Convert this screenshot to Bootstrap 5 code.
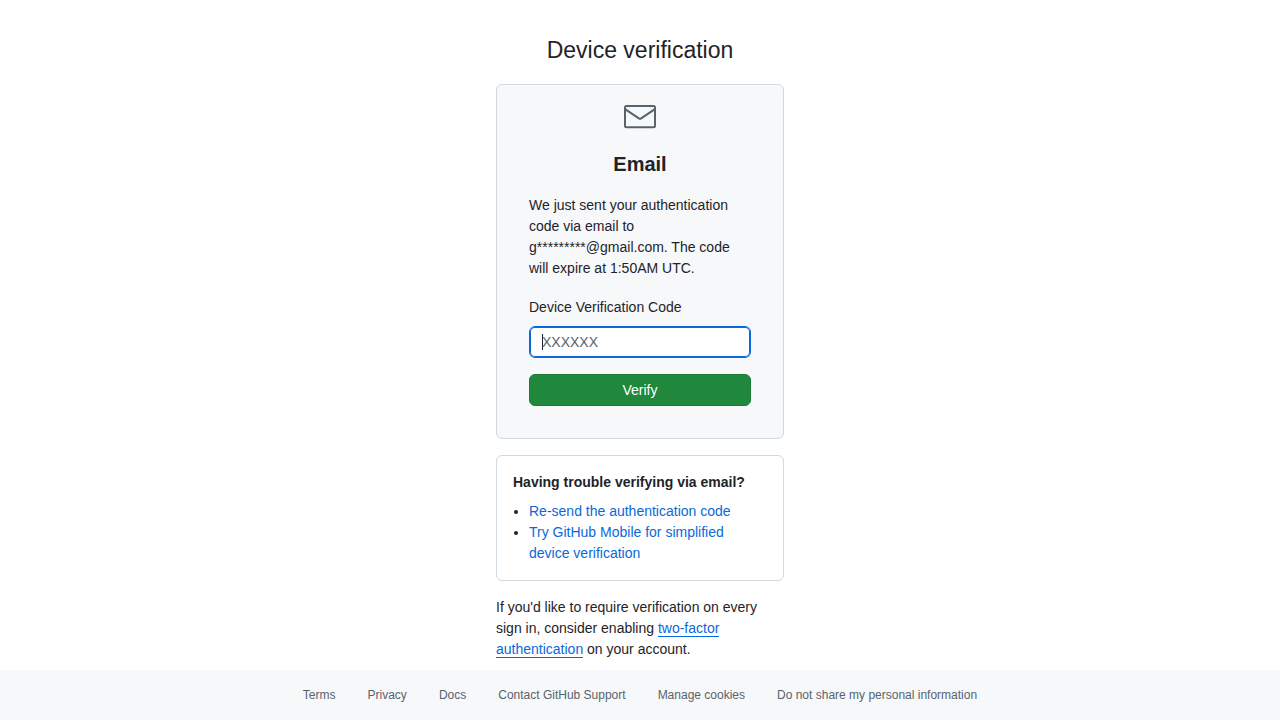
<!DOCTYPE html>
<html lang="en">
<head>
<meta charset="utf-8">
<meta name="viewport" content="width=device-width, initial-scale=1">
<title>Device verification</title>
<link href="https://cdn.jsdelivr.net/npm/bootstrap@5.3.0/dist/css/bootstrap.min.css" rel="stylesheet">
<style>
  body {
    font-family: "Liberation Sans", Arial, sans-serif;
    font-size: 14px;
    line-height: 21px;
    color: #1f2328;
  }
  a { color: #0969da; text-decoration: none; }
  a:hover { text-decoration: underline; }
  .auth-column { max-width: 288px; }
  .auth-title { font-size: 23px; line-height: 36px; font-weight: 400; }
  .auth-subtitle { font-size: 20px; line-height: 30px; font-weight: 700; }
  .auth-panel { border: 1px solid #d1d9e0; border-radius: 6px; }
  .surface { background: #f6f8fa; }
  .mail-icon { fill: #59636e; }
  .help-title { font-size: 14px; line-height: 21px; font-weight: 700; }
  .help-list { padding-left: 16px; }
  .intro { margin-bottom: 18px; }
  .code-input {
    height: 32px;
    padding: 4px 12px;
    font-size: 14px;
    line-height: 20px;
    color: #1f2328;
    border-color: #d1d9e0;
    border-radius: 6px;
  }
  .code-input::placeholder { color: #59636e; }
  .code-input:focus {
    color: #1f2328;
    border-color: #0969da;
    box-shadow: inset 0 0 0 1px #0969da;
  }
  /* Steady caret while the focused field is still empty */
  .code-input:focus:placeholder-shown {
    caret-color: transparent;
    background: #fff linear-gradient(#1f2328, #1f2328) 12px center / 1px 16px no-repeat;
  }
  .btn-verify {
    --bs-btn-color: #fff;
    --bs-btn-bg: #1f883d;
    --bs-btn-border-color: #1e7b38;
    --bs-btn-hover-color: #fff;
    --bs-btn-hover-bg: #1a7f37;
    --bs-btn-hover-border-color: #1a7f37;
    --bs-btn-font-size: 14px;
    --bs-btn-line-height: 20px;
    --bs-btn-padding-y: 5px;
    --bs-btn-border-radius: 6px;
  }
  .inline-link { border-bottom: 1px solid #0969da; }
  .site-footer { font-size: 12px; line-height: 18px; }
  .site-footer a { color: #59636e; }
</style>
</head>
<body class="d-flex flex-column min-vh-100">
  <main class="auth-column w-100 mx-auto pt-3">
    <h1 class="auth-title text-center pt-3 mb-3">Device verification</h1>

    <section class="auth-panel surface pt-3 mb-3">
      <div class="text-center">
        <svg class="mail-icon d-block mx-auto mb-3" width="32" height="32" viewBox="0 0 24 24" aria-hidden="true"><path d="M1.75 3h20.5c.966 0 1.75.784 1.75 1.75v14a1.75 1.75 0 0 1-1.75 1.75H1.75A1.75 1.75 0 0 1 0 18.75v-14C0 3.784.784 3 1.75 3ZM1.5 7.412V18.75c0 .138.112.25.25.25h20.5a.25.25 0 0 0 .25-.25V7.412l-9.52 6.433c-.592.4-1.368.4-1.96 0Zm0-2.662v.852l10.36 7a.25.25 0 0 0 .28 0l10.36-7V4.75a.25.25 0 0 0-.25-.25H1.75a.25.25 0 0 0-.25.25Z"/></svg>
        <h2 class="auth-subtitle mb-3">Email</h2>
      </div>
      <form class="px-3 pb-3 mx-3 mb-3">
        <p class="intro">We just sent your authentication code via email to g*********@gmail.com. The code will expire at 1:50AM UTC.</p>
        <label for="otp" class="d-block mb-2">Device Verification Code</label>
        <input type="text" id="otp" class="form-control code-input mb-3" placeholder="XXXXXX" autocomplete="off" autofocus>
        <button type="submit" class="btn btn-verify w-100">Verify</button>
      </form>
    </section>

    <section class="auth-panel p-3 mb-3">
      <h3 class="help-title mb-2">Having trouble verifying via email?</h3>
      <ul class="help-list mb-0">
        <li><a href="#">Re-send the authentication code</a></li>
        <li><a href="#">Try GitHub Mobile for simplified device verification</a></li>
      </ul>
    </section>

    <p class="mb-2">If you'd like to require verification on every sign in, consider enabling <a href="#" class="inline-link">two-factor authentication</a> on your account.</p>
  </main>

  <footer class="site-footer surface mt-auto py-3">
    <ul class="list-unstyled d-flex flex-wrap justify-content-center mb-0">
      <li class="mx-3"><a href="#">Terms</a></li>
      <li class="mx-3"><a href="#">Privacy</a></li>
      <li class="mx-3"><a href="#">Docs</a></li>
      <li class="mx-3"><a href="#">Contact GitHub Support</a></li>
      <li class="mx-3"><a href="#">Manage cookies</a></li>
      <li class="mx-3"><a href="#">Do not share my personal information</a></li>
    </ul>
  </footer>
<script src="https://cdn.jsdelivr.net/npm/bootstrap@5.3.0/dist/js/bootstrap.bundle.min.js"></script>
</body>
</html>
